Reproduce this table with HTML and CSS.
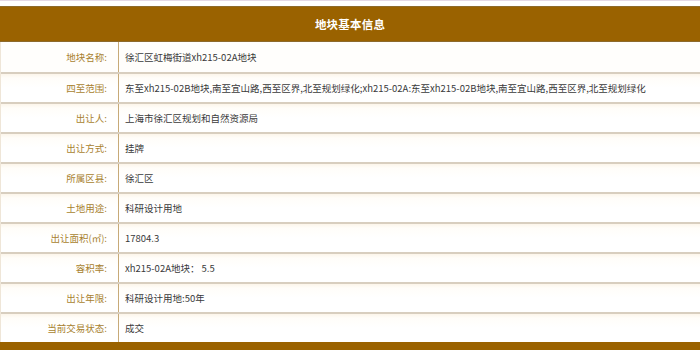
FILE: index.html
```html
<!DOCTYPE html>
<html lang="zh-CN">
<head>
<meta charset="utf-8">
<title>地块基本信息</title>
<link rel="stylesheet" href="styles.css">
</head>
<body>
<div class="topline"></div>
<section class="plot">
  <h2 class="plot-title">地块基本信息</h2>
  <dl class="plot-info">
    <div class="row"><dt>地块名称:</dt><dd>徐汇区虹梅街道xh215-02A地块</dd></div>
    <div class="row"><dt>四至范围:</dt><dd>东至xh215-02B地块,南至宜山路,西至区界,北至规划绿化;xh215-02A:东至xh215-02B地块,南至宜山路,西至区界,北至规划绿化</dd></div>
    <div class="row"><dt>出让人:</dt><dd>上海市徐汇区规划和自然资源局</dd></div>
    <div class="row"><dt>出让方式:</dt><dd>挂牌</dd></div>
    <div class="row"><dt>所属区县:</dt><dd>徐汇区</dd></div>
    <div class="row"><dt>土地用途:</dt><dd>科研设计用地</dd></div>
    <div class="row"><dt>出让面积(㎡):</dt><dd>17804.3</dd></div>
    <div class="row"><dt>容积率:</dt><dd>xh215-02A地块：&nbsp;5.5</dd></div>
    <div class="row"><dt>出让年限:</dt><dd>科研设计用地:50年</dd></div>
    <div class="row"><dt>当前交易状态:</dt><dd>成交</dd></div>
  </dl>
  <div class="plot-foot"></div>
</section>
</body>
</html>
```

FILE: styles.css
```css
html, body {
  margin: 0;
  padding: 0;
  background: #ffffff;
}

body {
  font-family: "Noto Sans CJK SC", "Noto Sans", sans-serif;
  width: 700px;
  overflow: hidden;
}

.topline {
  height: 1px;
  background: #e4d9e6;
}

.plot {
  margin-top: 5px;
}

.plot-title {
  margin: 0;
  height: 36px;
  box-sizing: border-box;
  display: flex;
  align-items: center;
  justify-content: center;
  background: #9a6200;
  border-top: 1px solid #8d6a2c;
  border-bottom: 1px solid #8d6a2c;
  color: #ffffff;
  font-size: 11.5px;
  font-weight: 700;
  letter-spacing: 0.2px;
}

.plot-info {
  margin: 0;
  border-left: 1px solid #efe6d8;
}

.row {
  display: grid;
  grid-template-columns: 118px 1fr;
  height: 30px;
  box-sizing: border-box;
  background: linear-gradient(#fcf5ea 0, #fffdf9 4px, #ffffff 14px);
}

.row + .row {
  border-top: 2px solid #d8cebf;
}

.row:first-child {
  background: #fffefc;
}

.row dt,
.row dd {
  margin: 0;
  display: flex;
  align-items: center;
  font-size: 9.5px;
  white-space: nowrap;
}

.row dt {
  justify-content: flex-end;
  padding-right: 11px;
  color: #a87f2e;
  border-right: 1px solid #c7aa78;
}

.row dd {
  padding-left: 6px;
  color: #3a3a3a;
}

.plot-foot {
  height: 8px;
  background: #9a6200;
}
```
